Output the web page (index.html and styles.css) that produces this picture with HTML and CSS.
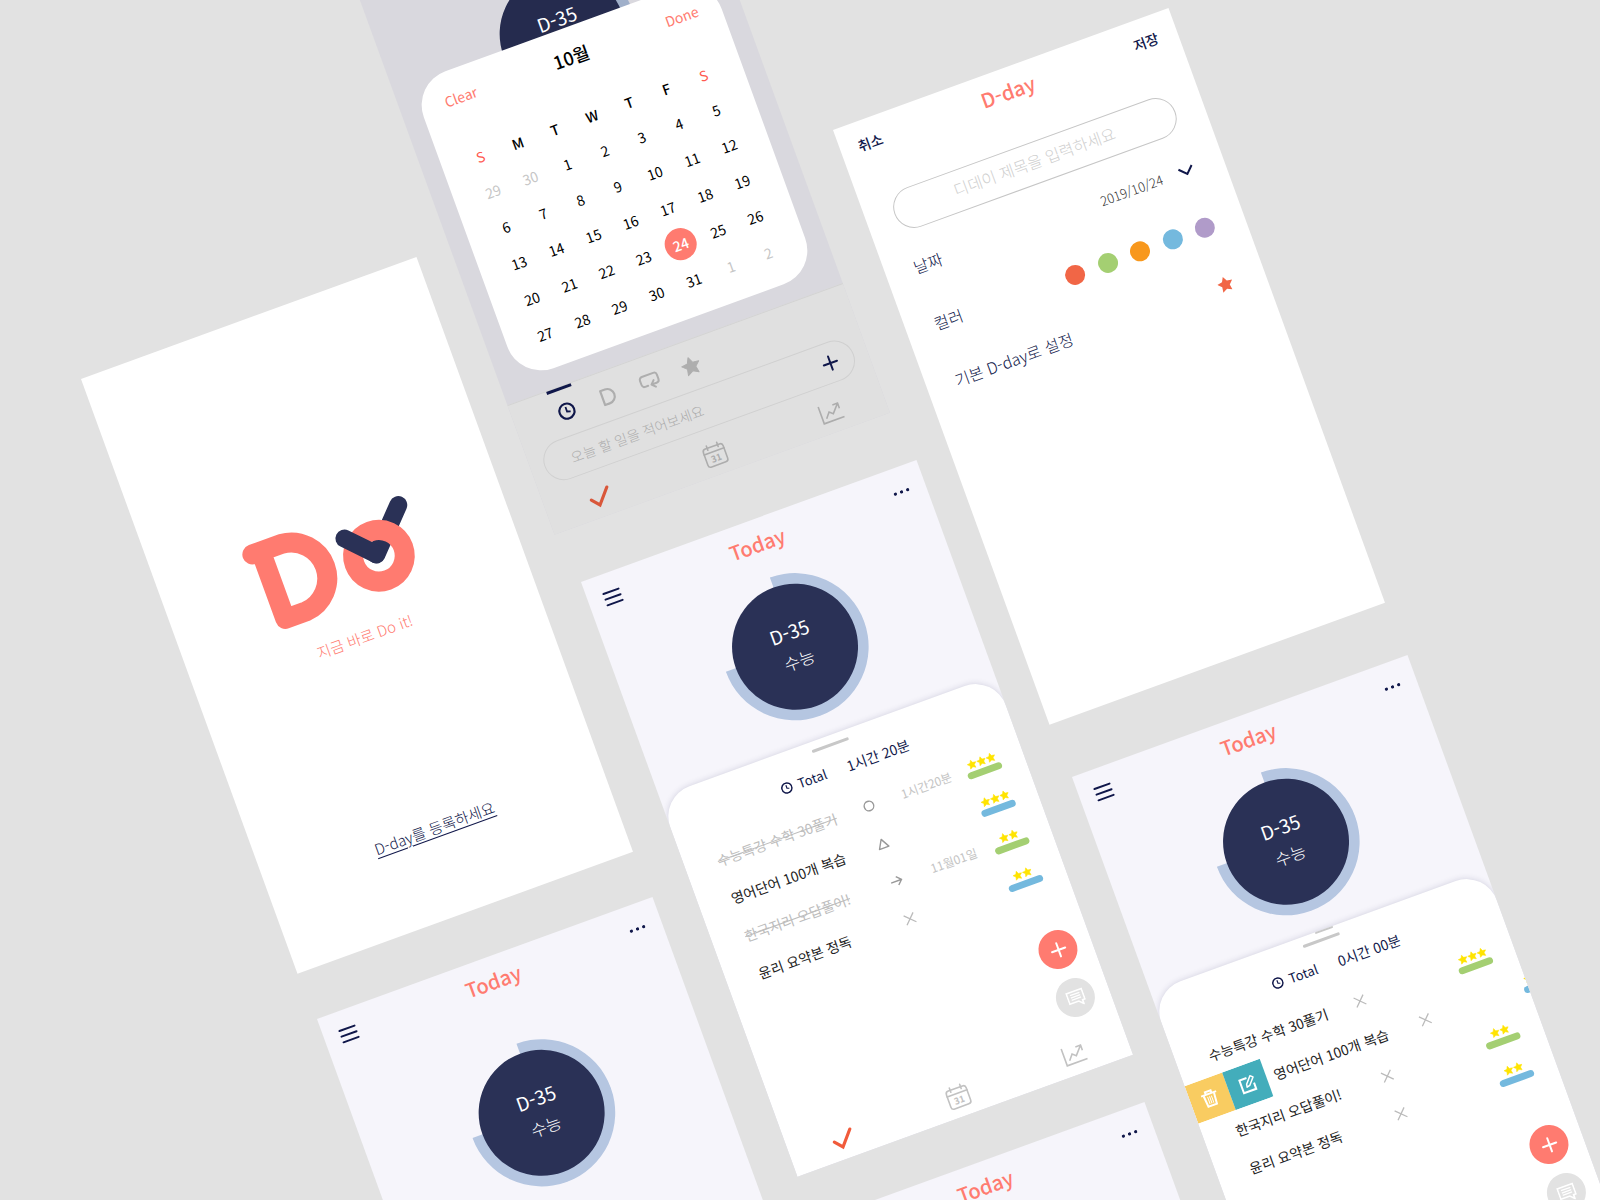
FILE: index.html
```html
<!DOCTYPE html>
<html lang="ko">
<head>
<meta charset="utf-8">
<title>Do</title>
<link rel="stylesheet" href="styles.css">
</head>
<body>
<svg class="sprite" aria-hidden="true">
  <symbol id="menu" viewBox="0 0 20 16"><path d="M2 2H18M2 8H18M2 14H18" fill="none" stroke="currentColor" stroke-width="2" stroke-linecap="round"/></symbol>
  <symbol id="more" viewBox="0 0 18 4"><circle cx="2.500" cy="2" r="1.600" fill="currentColor"/><circle cx="9" cy="2" r="1.600" fill="currentColor"/><circle cx="15.500" cy="2" r="1.600" fill="currentColor"/></symbol>
  <symbol id="ring" viewBox="0 0 148 148"><path d="M74 .4A73.600 73.600 0 1 1 .4 74H74Z" fill="var(--ring)"/><circle cx="74" cy="74" r="63" fill="var(--disc)"/></symbol>
  <symbol id="clock" viewBox="0 0 18 18"><circle cx="9" cy="9" r="7.600" fill="none" stroke="currentColor" stroke-width="2.200"/><path d="M9 4.600V9.400L12.400 10.600" fill="none" stroke="currentColor" stroke-width="1.800"/></symbol>
  <symbol id="dee" viewBox="0 0 18 18"><path d="M3 1.600H8A7.400 7.400 0 0 1 8 16.400H3Z" fill="none" stroke="currentColor" stroke-width="2.200" stroke-linejoin="round"/></symbol>
  <symbol id="loop" viewBox="0 0 22 18"><path d="M8 13H5A3 3 0 0 1 2 10V5.500A3 3 0 0 1 5 2.500H17A3 3 0 0 1 20 5.500V10A3 3 0 0 1 17 13H12M15 9.500L11.500 13L15 16.500" fill="none" stroke="currentColor" stroke-width="2" stroke-linecap="round" stroke-linejoin="round"/></symbol>
  <symbol id="star" viewBox="0 0 20 20"><path d="M10 1.200L12.700 6.900L19 7.700L14.400 12L15.600 18.300L10 15.200L4.400 18.300L5.600 12L1 7.700L7.300 6.900Z" fill="currentColor" stroke="currentColor" stroke-width="1" stroke-linejoin="round"/></symbol>
  <symbol id="plus" viewBox="0 0 18 18"><path d="M9 2V16M2 9H16" fill="none" stroke="currentColor" stroke-width="2" stroke-linecap="round"/></symbol>
  <symbol id="check" viewBox="0 0 25 25"><path d="M3.500 13L10 20.500L22.500 6" fill="none" stroke="currentColor" stroke-width="3.200" stroke-linecap="round" stroke-linejoin="miter"/></symbol>
  <symbol id="chart" viewBox="0 0 25 25"><path d="M2.500 3V21H24" fill="none" stroke="currentColor" stroke-width="1.600"/><path d="M6.500 17L11 11.500L14.500 14.500L21.500 6.500M16.500 6L22 6L22 11.500" fill="none" stroke="currentColor" stroke-width="1.600"/></symbol>
  <symbol id="note" viewBox="0 0 18 18"><path d="M1 2H17V13H14.500V17L10.500 13H1Z" fill="none" stroke="currentColor" stroke-width="1.600"/><path d="M4 5H14M4 7.500H14M4 10H14" stroke="currentColor" stroke-width="1.300"/></symbol>
  <symbol id="m-circle" viewBox="0 0 14 14"><circle cx="7" cy="7" r="4.800" fill="none" stroke="currentColor" stroke-width="1.400"/></symbol>
  <symbol id="m-triangle" viewBox="0 0 14 14"><path d="M7 2.500L12 11.500H2Z" fill="none" stroke="currentColor" stroke-width="1.400" stroke-linejoin="round"/></symbol>
  <symbol id="m-arrow" viewBox="0 0 14 14"><path d="M1.500 7H12M8 2.500L12.500 7L8 11.500" fill="none" stroke="currentColor" stroke-width="1.400"/></symbol>
  <symbol id="m-cross" viewBox="0 0 14 14"><path d="M2 2L12 12M12 2L2 12" fill="none" stroke="currentColor" stroke-width="1.300"/></symbol>
  <symbol id="chevron" viewBox="0 0 16 10"><path d="M1 1.500L8 8.500L15 1.500" fill="none" stroke="currentColor" stroke-width="2"/></symbol>
  <symbol id="trash" viewBox="0 0 18 18"><path d="M1 4.500H17M6 4V1.800H12V4" fill="none" stroke="currentColor" stroke-width="2"/><path d="M3.500 5L4.500 16.500H13.500L14.500 5" fill="none" stroke="currentColor" stroke-width="2"/><path d="M7 7V14.500M9 7V14.500M11 7V14.500" stroke="currentColor" stroke-width="1"/></symbol>
  <symbol id="edit" viewBox="0 0 18 18"><path d="M10 2.500H2.500V16H15.500V9.500" fill="none" stroke="currentColor" stroke-width="2"/><path d="M8 8.500L14 1.500L16.500 3.800L10.500 10.600L7.500 11.400Z" fill="none" stroke="currentColor" stroke-width="1.500" stroke-linejoin="round"/></symbol>
</svg>

<main class="canvas">

  <section class="screen screen--splash">
    <svg class="logo" viewBox="90 205 180 102" role="img" aria-label="Do">
      <path d="M102 223.500H133A36 36 0 0 1 133 295.300H111V223.500" fill="none" stroke="#ff7b70" stroke-width="20" stroke-linecap="round" stroke-linejoin="round"/>
      <path d="M218.500 266L256 227" stroke="#2a3156" stroke-width="18" stroke-linecap="round"/>
      <circle cx="220.500" cy="268" r="25.800" fill="none" stroke="#ff7b70" stroke-width="20"/>
      <path d="M194 240L218.500 265.500" stroke="#2a3156" stroke-width="18" stroke-linecap="round"/>
    </svg>
    <p class="tagline">지금 바로 Do it!</p>
    <a class="start" href="#dday">D-day를 등록하세요</a>
  </section>

  <section class="screen screen--picker">
    <div class="dial dial--bare">
      <svg width="148" height="148"><use href="#ring"/></svg>
      <div class="dial-text"><strong>D-35</strong></div>
    </div>
    <div class="composer">
      <div class="tabs">
        <button class="tab tab--on" aria-label="시간"><svg width="18" height="18"><use href="#clock"/></svg></button>
        <button class="tab" aria-label="D-day"><svg width="18" height="18"><use href="#dee"/></svg></button>
        <button class="tab" aria-label="반복"><svg width="22" height="18"><use href="#loop"/></svg></button>
        <button class="tab" aria-label="중요도"><svg width="20" height="20"><use href="#star"/></svg></button>
      </div>
      <div class="todo-field">
        <input class="todo-input" type="text" aria-label="할 일" placeholder="오늘 할 일을 적어보세요">
        <button class="icon-btn" aria-label="추가"><svg width="18" height="18"><use href="#plus"/></svg></button>
      </div>
      <nav class="nav">
        <a class="nav-on" href="#today" aria-label="오늘"><svg width="25" height="25"><use href="#check"/></svg></a>
        <a href="#calendar" aria-label="달력"><svg width="25" height="25" viewBox="0 0 25 25"><rect x="2" y="4" width="21" height="19" rx="3" fill="none" stroke="currentColor" stroke-width="1.600"/><path d="M2 9.200H23M7 1.500V6M18 1.500V6" fill="none" stroke="currentColor" stroke-width="1.600" stroke-linecap="round"/><text x="12.500" y="19.500" text-anchor="middle" font-size="9" font-weight="700" fill="currentColor">31</text></svg></a>
        <a href="#stats" aria-label="통계"><svg width="25" height="25"><use href="#chart"/></svg></a>
      </nav>
    </div>
    <div class="modal">
      <div class="modal-head">
        <button class="text-btn">Clear</button>
        <h3>10월</h3>
        <button class="text-btn">Done</button>
      </div>
      <table class="month">
        <thead><tr><th class="sun">S</th><th>M</th><th>T</th><th>W</th><th>T</th><th>F</th><th class="sun">S</th></tr></thead>
        <tbody>
          <tr><td><button class="day out">29</button></td><td><button class="day out">30</button></td><td><button class="day">1</button></td><td><button class="day">2</button></td><td><button class="day">3</button></td><td><button class="day">4</button></td><td><button class="day">5</button></td></tr>
          <tr><td><button class="day">6</button></td><td><button class="day">7</button></td><td><button class="day">8</button></td><td><button class="day">9</button></td><td><button class="day">10</button></td><td><button class="day">11</button></td><td><button class="day">12</button></td></tr>
          <tr><td><button class="day">13</button></td><td><button class="day">14</button></td><td><button class="day">15</button></td><td><button class="day">16</button></td><td><button class="day">17</button></td><td><button class="day">18</button></td><td><button class="day">19</button></td></tr>
          <tr><td><button class="day">20</button></td><td><button class="day">21</button></td><td><button class="day">22</button></td><td><button class="day">23</button></td><td><button class="day picked">24</button></td><td><button class="day">25</button></td><td><button class="day">26</button></td></tr>
          <tr><td><button class="day">27</button></td><td><button class="day">28</button></td><td><button class="day">29</button></td><td><button class="day">30</button></td><td><button class="day">31</button></td><td><button class="day out">1</button></td><td><button class="day out">2</button></td></tr>
        </tbody>
      </table>
    </div>
  </section>

  <section class="screen screen--dday">
    <header class="topbar topbar--form">
      <button class="text-btn text-btn--navy">취소</button>
      <h2 class="title">D-day</h2>
      <button class="text-btn text-btn--navy">저장</button>
    </header>
    <input class="dday-input" type="text" aria-label="디데이 제목" placeholder="디데이 제목을 입력하세요">
    <div class="form-row">
      <label class="form-label" for="date">날짜</label>
      <div class="date">
        <select id="date"><option>2019/10/24</option></select>
        <svg width="16" height="10"><use href="#chevron"/></svg>
      </div>
    </div>
    <div class="form-row" role="radiogroup" aria-labelledby="color-label">
      <span class="form-label" id="color-label">컬러</span>
      <div class="swatches">
        <input class="swatch red" type="radio" name="color" aria-label="빨강">
        <input class="swatch green" type="radio" name="color" aria-label="초록">
        <input class="swatch orange" type="radio" name="color" aria-label="주황">
        <input class="swatch blue" type="radio" name="color" aria-label="파랑">
        <input class="swatch purple" type="radio" name="color" aria-label="보라">
      </div>
    </div>
    <div class="form-row">
      <label class="form-label" for="main-dday">기본 D-day로 설정</label>
      <input class="star-check" id="main-dday" type="checkbox" checked>
    </div>
  </section>

  <section class="screen screen--list">
    <header class="topbar">
      <button class="icon-btn" aria-label="메뉴"><svg width="20" height="16"><use href="#menu"/></svg></button>
      <h2 class="title">Today</h2>
      <button class="icon-btn" aria-label="더보기"><svg width="18" height="4"><use href="#more"/></svg></button>
    </header>
    <div class="dial">
      <svg width="148" height="148"><use href="#ring"/></svg>
      <div class="dial-text"><strong>D-35</strong><span>수능</span></div>
    </div>
    <div class="panel">
      <div class="handle"></div>
      <p class="total"><svg width="12" height="12"><use href="#clock"/></svg><span class="total-label">Total</span><span>1시간 20분</span></p>
      <ul class="tasks">
        <li class="task done"><span class="name">수능특강 수학 30풀기</span><button class="mark" aria-label="완료"><svg width="14" height="14"><use href="#m-circle"/></svg></button><span class="when">1시간20분</span><span class="rating green"><span class="stars"><svg><use href="#star"/></svg><svg><use href="#star"/></svg><svg><use href="#star"/></svg></span></span></li>
        <li class="task"><span class="name">영어단어 100개 복습</span><button class="mark" aria-label="진행 중"><svg width="14" height="14"><use href="#m-triangle"/></svg></button><span class="when"></span><span class="rating blue"><span class="stars"><svg><use href="#star"/></svg><svg><use href="#star"/></svg><svg><use href="#star"/></svg></span></span></li>
        <li class="task done"><span class="name">한국지리 오답풀이!</span><button class="mark" aria-label="미루기"><svg width="14" height="14"><use href="#m-arrow"/></svg></button><span class="when">11월01일</span><span class="rating green"><span class="stars"><svg><use href="#star"/></svg><svg><use href="#star"/></svg></span></span></li>
        <li class="task"><span class="name">윤리 요약본 정독</span><button class="mark mark--off" aria-label="안 함"><svg width="14" height="14"><use href="#m-cross"/></svg></button><span class="when"></span><span class="rating blue"><span class="stars"><svg><use href="#star"/></svg><svg><use href="#star"/></svg></span></span></li>
      </ul>
      <nav class="nav">
        <a class="nav-on" href="#today" aria-label="오늘"><svg width="25" height="25"><use href="#check"/></svg></a>
        <a href="#calendar" aria-label="달력"><svg width="25" height="25" viewBox="0 0 25 25"><rect x="2" y="4" width="21" height="19" rx="3" fill="none" stroke="currentColor" stroke-width="1.600"/><path d="M2 9.200H23M7 1.500V6M18 1.500V6" fill="none" stroke="currentColor" stroke-width="1.600" stroke-linecap="round"/><text x="12.500" y="19.500" text-anchor="middle" font-size="9" font-weight="700" fill="currentColor">31</text></svg></a>
        <a href="#stats" aria-label="통계"><svg width="25" height="25"><use href="#chart"/></svg></a>
      </nav>
    </div>
    <div class="fabs">
      <button class="fab" aria-label="추가"><svg width="18" height="18"><use href="#plus"/></svg></button>
      <button class="fab fab--gray" aria-label="메모"><svg width="18" height="18"><use href="#note"/></svg></button>
    </div>
  </section>

  <section class="screen screen--swipe">
    <header class="topbar">
      <button class="icon-btn" aria-label="메뉴"><svg width="20" height="16"><use href="#menu"/></svg></button>
      <h2 class="title">Today</h2>
      <button class="icon-btn" aria-label="더보기"><svg width="18" height="4"><use href="#more"/></svg></button>
    </header>
    <div class="dial">
      <svg width="148" height="148"><use href="#ring"/></svg>
      <div class="dial-text"><strong>D-35</strong><span>수능</span></div>
    </div>
    <div class="panel panel--double">
      <div class="handle"></div>
      <p class="total"><svg width="12" height="12"><use href="#clock"/></svg><span class="total-label">Total</span><span>0시간 00분</span></p>
      <ul class="tasks">
        <li class="task"><span class="name">수능특강 수학 30풀기</span><button class="mark mark--off" aria-label="안 함"><svg width="14" height="14"><use href="#m-cross"/></svg></button><span class="when"></span><span class="rating green"><span class="stars"><svg><use href="#star"/></svg><svg><use href="#star"/></svg><svg><use href="#star"/></svg></span></span></li>
        <li class="swiped">
          <div class="actions">
            <button class="action action--delete" aria-label="삭제"><svg width="18" height="18"><use href="#trash"/></svg></button>
            <button class="action action--edit" aria-label="수정"><svg width="18" height="18"><use href="#edit"/></svg></button>
          </div>
          <div class="task"><span class="name">영어단어 100개 복습</span><button class="mark mark--off" aria-label="안 함"><svg width="14" height="14"><use href="#m-cross"/></svg></button><span class="when"></span><span class="rating blue"><span class="stars"><svg><use href="#star"/></svg><svg><use href="#star"/></svg><svg><use href="#star"/></svg></span></span></div>
        </li>
        <li class="task"><span class="name">한국지리 오답풀이!</span><button class="mark mark--off" aria-label="안 함"><svg width="14" height="14"><use href="#m-cross"/></svg></button><span class="when"></span><span class="rating green"><span class="stars"><svg><use href="#star"/></svg><svg><use href="#star"/></svg></span></span></li>
        <li class="task"><span class="name">윤리 요약본 정독</span><button class="mark mark--off" aria-label="안 함"><svg width="14" height="14"><use href="#m-cross"/></svg></button><span class="when"></span><span class="rating blue"><span class="stars"><svg><use href="#star"/></svg><svg><use href="#star"/></svg></span></span></li>
      </ul>
    </div>
    <div class="fabs">
      <button class="fab" aria-label="추가"><svg width="18" height="18"><use href="#plus"/></svg></button>
      <button class="fab fab--gray" aria-label="메모"><svg width="18" height="18"><use href="#note"/></svg></button>
    </div>
  </section>

  <section class="screen screen--empty">
    <header class="topbar">
      <button class="icon-btn" aria-label="메뉴"><svg width="20" height="16"><use href="#menu"/></svg></button>
      <h2 class="title">Today</h2>
      <button class="icon-btn" aria-label="더보기"><svg width="18" height="4"><use href="#more"/></svg></button>
    </header>
    <div class="dial dial--low">
      <svg width="148" height="148"><use href="#ring"/></svg>
      <div class="dial-text"><strong>D-35</strong><span>수능</span></div>
    </div>
  </section>

  <section class="screen screen--next">
    <header class="topbar">
      <button class="icon-btn" aria-label="메뉴"><svg width="20" height="16"><use href="#menu"/></svg></button>
      <h2 class="title">Today</h2>
      <button class="icon-btn" aria-label="더보기"><svg width="18" height="4"><use href="#more"/></svg></button>
    </header>
  </section>

</main>
</body>
</html>
```
FILE: styles.css
```css
* { box-sizing: border-box; }

body {
  margin: 0;
  background: #e2e2e2;
  color: #222;
  font-family: "Noto Sans CJK KR", "Noto Sans", sans-serif;
  font-size: 14px;
  line-height: 20px;
}

h2, h3, p, ul { margin: 0; padding: 0; }
ul { list-style: none; }
svg { display: block; }
button, input, select { font: inherit; color: inherit; }

button {
  display: grid;
  place-items: center;
  padding: 0;
  border: 0;
  background: none;
}

.sprite { position: absolute; width: 0; height: 0; }

/* Free canvas with tilted artboards */
.canvas {
  position: relative;
  height: 100vh;
  overflow: hidden;
}

.screen {
  --navy: #10174a;
  --coral: #ff7b70;
  --ring: #b5c6e1;
  --disc: #2a3156;
  position: absolute;
  display: flex;
  flex-direction: column;
  width: 357px;
  min-height: 633px;
  overflow: hidden;
  background: #f6f5fb;
  transform: rotate(-20deg);
  transform-origin: 0 0;
}

.screen--splash { left: 81px; top: 379px; background: #fff; }
.screen--picker { left: 338px; top: -60px; background: #d9d8de; --ring: #9fafc9; --disc: #252b4e; }
.screen--dday { left: 833px; top: 130px; background: #fff; }
.screen--list { left: 581px; top: 582px; }
.screen--swipe { left: 1072px; top: 777px; }
.screen--empty { left: 317px; top: 1019px; }
.screen--next { left: 809px; top: 1224px; }

/* Splash */
.screen--splash { align-items: center; }
.logo { width: 180px; height: 102px; margin-top: 205px; }
.tagline {
  margin-top: 20px;
  color: var(--coral);
  font-size: 15px;
  line-height: 24px;
  font-weight: 300;
}
.start {
  margin-top: 180px;
  color: var(--navy);
  font-size: 15px;
  line-height: 24px;
  font-weight: 300;
  text-underline-offset: 3px;
}

/* Header */
.topbar {
  display: flex;
  align-items: center;
  justify-content: space-between;
  height: 50px;
  padding: 0 15px;
  color: var(--navy);
}
.title {
  color: var(--coral);
  font-size: 20px;
  line-height: 30px;
  font-weight: 500;
}
.icon-btn { min-width: 20px; min-height: 20px; }
.text-btn { color: var(--coral); }
.text-btn--navy { color: var(--navy); font-weight: 500; }
.topbar--form { padding: 0 20px 2px 18px; }

/* Countdown dial */
.dial {
  display: grid;
  place-items: center;
  margin-top: 10px;
}
.dial--low { margin-top: 41px; }
.dial--bare { margin-top: 91px; }
.dial > * { grid-area: 1 / 1; }
.dial-text {
  display: flex;
  flex-direction: column;
  align-items: center;
  height: 64px;
  color: #fff;
}
.dial-text strong { font-size: 19px; line-height: 32px; font-weight: 400; }
.dial-text span { font-size: 17px; line-height: 28px; font-weight: 300; }

/* Task panel */
.panel {
  position: relative;
  display: flex;
  flex: 1;
  flex-direction: column;
  margin-top: 21px;
  padding-top: 8px;
  border-radius: 32px 32px 0 0;
  background: #fff;
  box-shadow: 0 0 6px rgba(40, 40, 90, .18);
}
.handle {
  width: 39px;
  height: 3px;
  margin: 0 auto;
  border-radius: 2px;
  background: #c8c8c8;
}
.panel--double::before {
  content: "";
  position: absolute;
  top: 0;
  left: 175px;
  width: 19px;
  height: 2px;
  border-radius: 1px;
  background: #c8c8c8;
}
.total {
  display: flex;
  align-items: center;
  gap: 6px;
  margin-top: 14px;
  padding-left: 117px;
  color: var(--navy);
}
.total-label { width: 46px; font-size: 13px; }
.tasks { margin-top: 15px; }
.task {
  display: grid;
  grid-template-columns: 141px 39px 1fr 36px;
  align-items: center;
  height: 40px;
  padding: 0 24px 0 33px;
}
.name { white-space: nowrap; }
.done .name { color: #bdbdbd; text-decoration: line-through; }
.mark { color: #999; }
.mark--off { color: #bbb; }
.when { color: #c4c4c4; font-size: 12px; text-align: center; }

.rating {
  display: flex;
  flex-direction: column;
  gap: 2px;
}
.rating::after {
  content: "";
  height: 7px;
  border-radius: 4px;
  background: currentColor;
}
.rating.green { color: #a4cf72; }
.rating.blue { color: #74b9de; }
.stars {
  display: flex;
  justify-content: center;
  color: #ffe400;
}
.stars svg { width: 10px; height: 10px; }

.swiped {
  position: relative;
  padding-left: 55px;
  overflow: hidden;
}
.swiped .task { width: 357px; }
.actions {
  position: absolute;
  top: 0;
  left: 0;
  display: flex;
  color: #fff;
}
.action { width: 40px; height: 40px; }
.action--delete { background: #f9cc61; }
.action--edit { background: #43adbb; }

.fabs {
  position: absolute;
  right: 15px;
  bottom: 54px;
  display: grid;
  gap: 12px;
}
.fab {
  width: 39px;
  height: 39px;
  border-radius: 50%;
  background: var(--coral);
  color: #fff;
}
.fab--gray { background: #e2e2e2; }

/* Bottom navigation */
.nav {
  display: flex;
  align-items: center;
  justify-content: space-between;
  height: 41px;
  margin-top: auto;
  padding: 0 43px;
}
.nav a { color: #c2c2c2; }
.nav .nav-on { color: #f15b3b; }

/* Composer under the date picker */
.composer {
  margin-top: auto;
  border-top: 1px solid #d3d3d3;
  background: #e0e0e0;
}
.composer .nav a { color: #adadad; }
.composer .nav .nav-on { color: #d9573a; }
.tabs {
  display: flex;
  height: 49px;
  padding-left: 32px;
}
.tab {
  position: relative;
  width: 44px;
  color: #aeaeae;
}
.tab--on { color: var(--navy); }
.tab--on::before {
  content: "";
  position: absolute;
  top: 0;
  left: 9px;
  width: 26px;
  height: 3px;
  background: currentColor;
}
.todo-field {
  display: flex;
  align-items: center;
  height: 41px;
  margin: 0 14px 6px;
  padding: 0 14px 0 27px;
  border: 1px solid #d0d0d0;
  border-radius: 21px;
  color: var(--navy);
}
.todo-input {
  flex: 1;
  min-width: 0;
  padding: 0;
  border: 0;
  background: none;
}
.todo-input::placeholder { color: #acacac; font-weight: 300; opacity: 1; }

/* Date picker */
.modal {
  position: absolute;
  top: 160px;
  left: 20px;
  right: 20px;
  padding: 14px 20px 16px;
  border-radius: 36px;
  background: #fff;
  color: #000;
}
.modal-head {
  display: flex;
  align-items: center;
  justify-content: space-between;
  height: 30px;
  padding: 0 3px 0 5px;
}
.modal-head h3 { font-size: 18px; font-weight: 500; }
.month {
  width: 100%;
  margin-top: 30px;
  border-collapse: collapse;
  table-layout: fixed;
  text-align: center;
}
.month th { height: 36px; padding: 0; font-weight: 500; }
.month .sun { color: #ff5a50; font-weight: 400; }
.month td { height: 38px; padding: 0; }
.day {
  width: 32px;
  height: 32px;
  margin: 0 auto;
  border-radius: 50%;
}
.day.out { color: #c6c6c6; }
.day.picked { background: var(--coral); color: #fff; font-weight: 500; }

/* D-day form */
.dday-input {
  height: 42px;
  margin: 29px 29px 8px;
  padding: 0 20px 4px;
  border: 1px solid #c6c6c6;
  border-radius: 21px;
  background: none;
  font-size: 16px;
  text-align: center;
}
.dday-input::placeholder { color: #cfcfcf; font-weight: 300; opacity: 1; }
.form-row {
  display: flex;
  align-items: center;
  justify-content: space-between;
  height: 60px;
  padding: 0 31px 0 29px;
  color: var(--navy);
  font-size: 16px;
  font-weight: 300;
}
.form-label { padding-bottom: 4px; }
.date {
  display: flex;
  align-items: center;
  gap: 17px;
}
.date select {
  appearance: none;
  padding: 0;
  border: 0;
  background: none;
  color: #333;
  font-size: 13px;
}
.swatches {
  display: flex;
  justify-content: space-between;
  width: 158px;
}
.swatch {
  appearance: none;
  width: 20px;
  height: 20px;
  margin: 0;
  border-radius: 50%;
}
.swatch.red { background: #f16646; }
.swatch.green { background: #a4cf72; }
.swatch.orange { background: #f8981d; }
.swatch.blue { background: #74b9de; }
.swatch.purple { background: #b09bc9; }
.star-check {
  appearance: none;
  width: 16px;
  height: 16px;
  margin: 0 2px 0 0;
  background: #f16646;
  clip-path: polygon(50% 2%, 66% 32%, 99% 38%, 75% 62%, 80% 96%, 50% 81%, 20% 96%, 25% 62%, 1% 38%, 34% 32%);
}
```
